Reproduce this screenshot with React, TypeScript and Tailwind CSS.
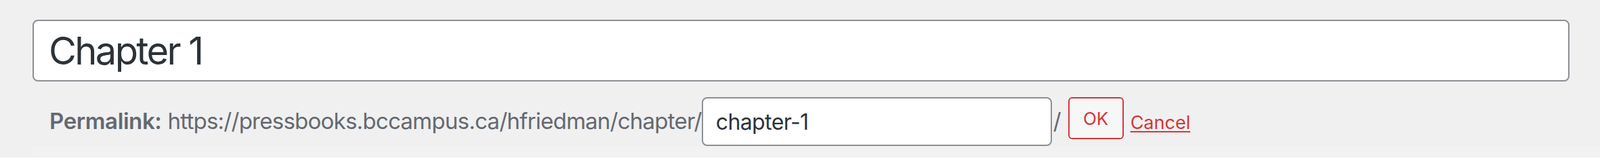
import React from 'react';

// Title + permalink editor, as in the block editor header
const App: React.FC = () => {
  return (
    <div
      className="w-[2362px] h-[232px] bg-[#f0f0f1] overflow-hidden"
      style={{ fontFamily: 'Inter, "Noto Sans", sans-serif' }}
    >
      <div className="pl-[48px] pr-[45px] pt-[29px]">
        {/* Title field */}
        <input
          type="text"
          defaultValue="Chapter 1"
          className="block w-full h-[91px] rounded-[8px] border-2 border-[#8c8f94] bg-white pl-[22px] text-[56px] tracking-[-2.6px] text-[#2c3338] outline-none"
        />

        {/* Permalink row */}
        <div className="flex items-center h-[72px] mt-[23px] pl-[25px] text-[33px] text-[#646970]">
          <strong className="font-semibold tracking-[-0.4px]">Permalink:</strong>
          <span className="ml-[9px] tracking-[-0.75px]">https://pressbooks.bccampus.ca/hfriedman/chapter/</span>
          <input
            type="text"
            defaultValue="chapter-1"
            className="h-[72px] w-[517px] rounded-[8px] border-2 border-[#8c8f94] bg-white pl-[19px] text-[32px] tracking-[-0.6px] text-[#2c3338] outline-none"
          />
          <span className="ml-[2px]">/</span>
          <button
            type="button"
            className="self-start ml-[10px] h-[62px] w-[82px] rounded-[6px] border-2 border-[#d63638] bg-[#f6f7f7] text-[26px] text-[#d63638]"
          >
            OK
          </button>
          <a
            href="#"
            className="ml-[10px] mt-[4px] text-[27px] text-[#d63638] underline decoration-2 underline-offset-[3px]"
          >
            Cancel
          </a>
        </div>
      </div>
      {/* faint panel edge below the row */}
      <div className="ml-[48px] h-[15px] bg-[#f2f2f3]" />
    </div>
  );
};

export default App;
